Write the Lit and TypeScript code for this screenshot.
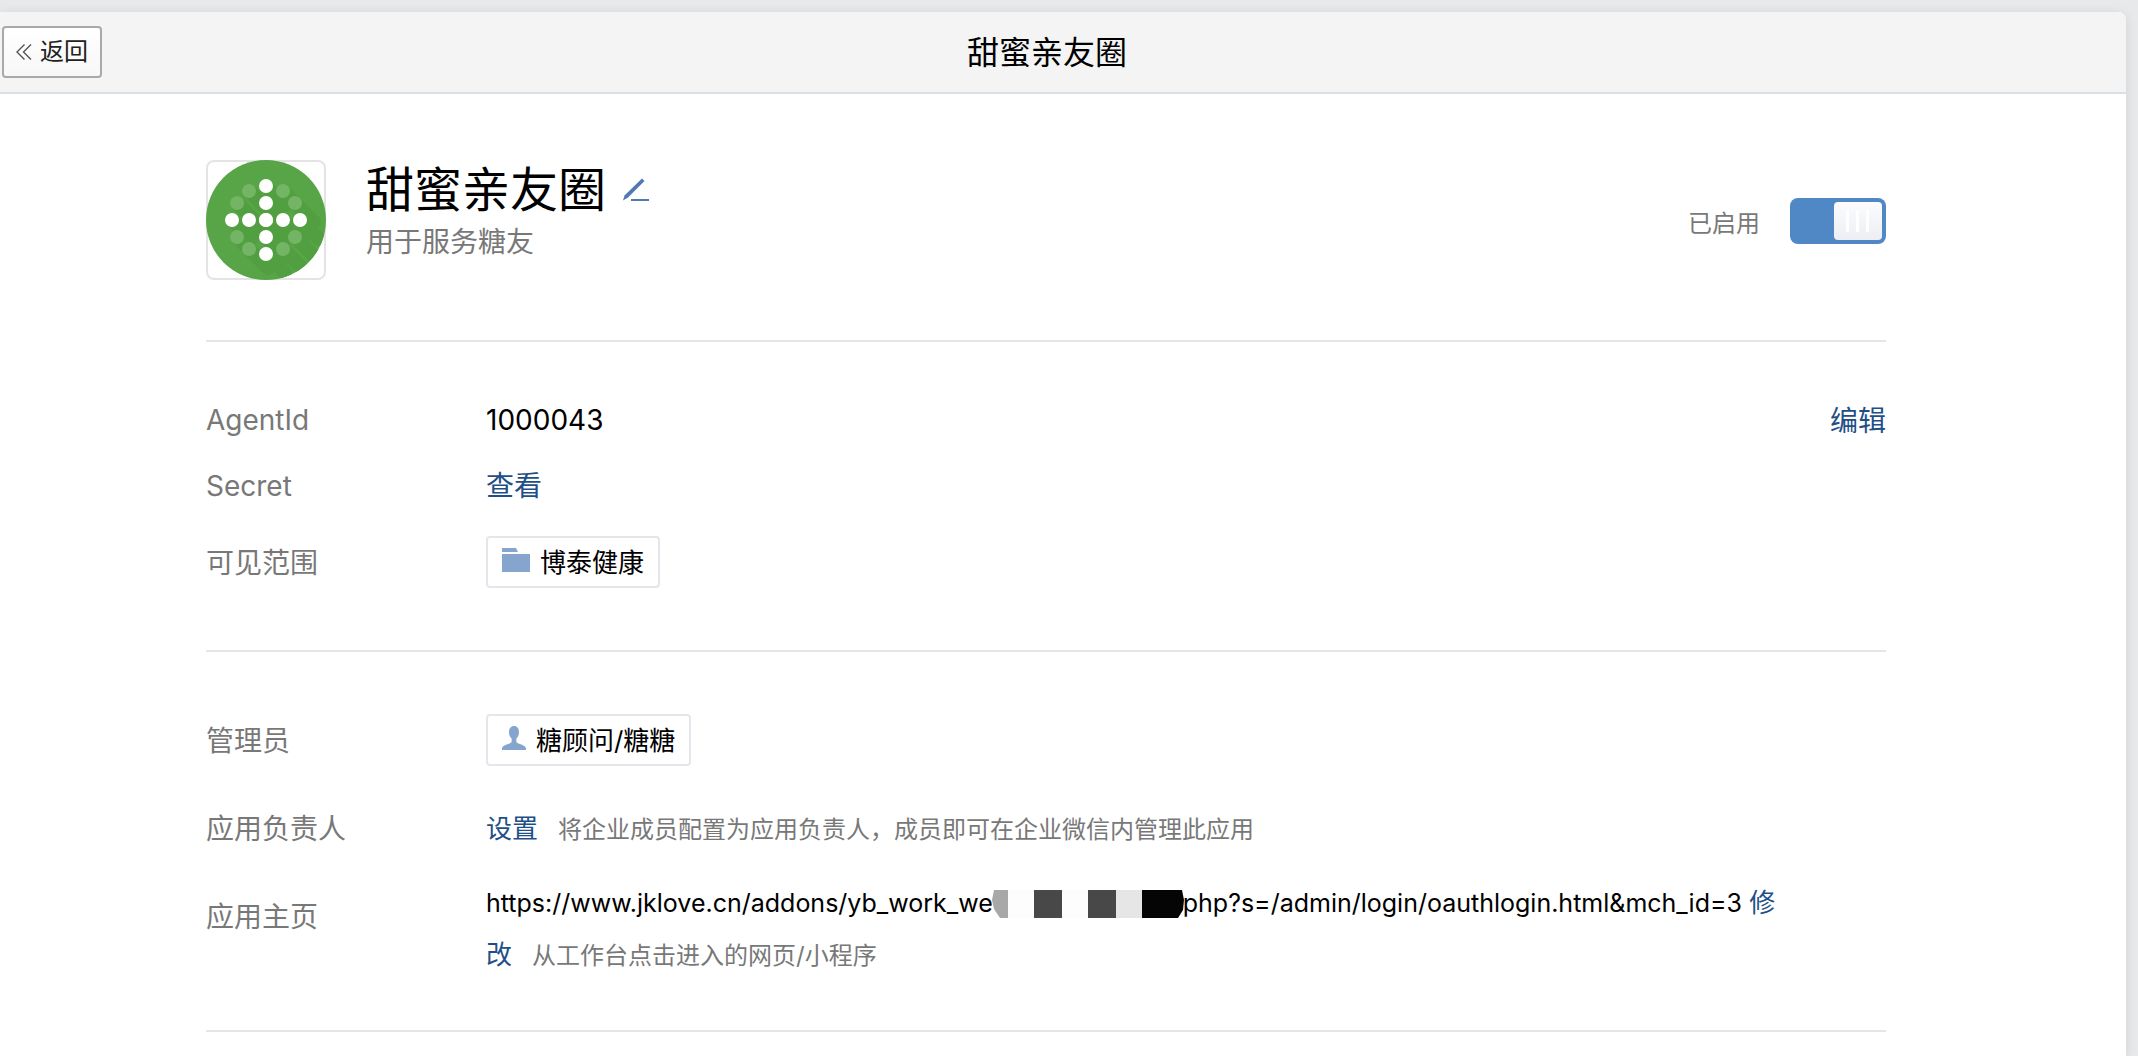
import { LitElement, html, css, svg } from "lit";
import { customElement, property, state } from "lit/decorators.js";

const AXIS = [26, 43, 60, 77, 94];
const RING: [number, number][] = [
  [43, 31], [77, 31], [31, 43], [89, 43],
  [31, 77], [89, 77], [43, 89], [77, 89],
];

@customElement("app-logo")
class AppLogo extends LitElement {
  static styles = css`
    :host { display: block; flex: none; }
    .frame {
      box-sizing: border-box;
      width: 120px;
      height: 120px;
      border: 2px solid #e4e4e4;
      border-radius: 8px;
    }
    .art { display: block; width: 120px; height: 120px; margin: -2px; }
  `;

  render() {
    const all: [number, number][] = [
      ...RING,
      ...AXIS.map((v) => [60, v] as [number, number]),
      ...AXIS.map((v) => [v, 60] as [number, number]),
    ];
    return html`
      <div class="frame">
        <svg class="art" viewBox="0 0 120 120" role="img" aria-label="应用图标">
          <defs><clipPath id="disc"><circle cx="60" cy="60" r="60" /></clipPath></defs>
          <circle cx="60" cy="60" r="60" fill="#58a547" />
          <g clip-path="url(#disc)" stroke="#529f42" stroke-width="14" stroke-linecap="round">
            ${all.map(([x, y]) => svg`<line x1=${x} y1=${y} x2=${x + 19} y2=${y + 19} />`)}
          </g>
          ${RING.map(([x, y]) => svg`<circle cx=${x} cy=${y} r="7" fill="#74b565" />`)}
          ${AXIS.map((v) => svg`
            <circle cx="60" cy=${v} r="7" fill="#fff" />
            <circle cx=${v} cy="60" r="7" fill="#fff" />`)}
        </svg>
      </div>
    `;
  }
}

@customElement("entity-tag")
class EntityTag extends LitElement {
  @property() kind = "folder";

  static styles = css`
    :host { display: inline-block; justify-self: start; }
    .tag {
      display: flex;
      align-items: center;
      gap: 10px;
      box-sizing: border-box;
      height: 52px;
      padding: 2px 14px 0;
      border: 2px solid #e4e6eb;
      border-radius: 4px;
      background: #fff;
      color: #000;
      font-size: 26px;
      line-height: 36px;
      white-space: nowrap;
    }
    svg { display: block; margin-bottom: 6px; fill: #85a5cf; }
  `;

  render() {
    const icon = this.kind === "folder"
      ? html`<svg width="28" height="24" viewBox="0 0 28 24" aria-hidden="true">
          <path d="M0 0h14l2 4H0zM0 6h28v18H0z" /></svg>`
      : html`<svg width="24" height="24" viewBox="0 0 24 24" aria-hidden="true">
          <path d="M12 0c3.200 0 5 2.500 5 6 0 3-1 5.200-2.600 6.500v3c0 1 .8 1.500 2 2C20.500 19 24 20 24 22.500V24H0v-1.500C0 20 3.500 19 7.600 17.500c1.200-.5 2-1 2-2v-3C8 11.200 7 9 7 6c0-3.500 1.800-6 5-6z" /></svg>`;
    return html`<span class="tag">${icon}<slot></slot></span>`;
  }
}

@customElement("app-root")
class AppRoot extends LitElement {
  @state() private enabled = true;

  static styles = css`
    :host {
      display: block;
      box-sizing: border-box;
      min-height: 100vh;
      padding: 12px 12px 0 0;
      overflow: hidden;
      background: #e8e9eb;
      color: #000;
      font-family: Inter, "Noto Sans CJK SC", sans-serif;
      font-size: 28px;
    }
    .panel {
      min-height: calc(100vh - 12px);
      border-radius: 0 8px 0 0;
      background: #fff;
      box-shadow: 0 2px 12px rgba(0, 0, 0, 0.1);
    }
    .bar {
      display: grid;
      grid-template-columns: 172px 1fr 206px;
      align-items: center;
      height: 80px;
      padding-left: 2px;
      border-bottom: 2px solid #dbe0e5;
      border-radius: 0 8px 0 0;
      background: #f4f4f4;
    }
    .bar-title {
      margin: 0;
      padding-top: 2px;
      font-size: 32px;
      line-height: 48px;
      font-weight: 400;
      text-align: center;
    }
    .back {
      display: flex;
      align-items: center;
      justify-content: center;
      justify-self: start;
      gap: 8px;
      box-sizing: border-box;
      width: 100px;
      height: 52px;
      padding: 0;
      border: 2px solid #a9a9a9;
      border-radius: 4px;
      background: linear-gradient(#fff, #f7f7f7);
      color: #222;
      font: inherit;
      font-size: 24px;
      line-height: 36px;
    }
    .content { padding: 66px 240px 0 206px; }
    .app {
      display: flex;
      align-items: center;
      padding-bottom: 60px;
      border-bottom: 2px solid #e4e6eb;
    }
    .intro { flex: 1; padding: 0 0 16px 40px; }
    .name-line { display: flex; align-items: center; gap: 16px; }
    .name { margin: 0; font-size: 48px; line-height: 60px; font-weight: 400; }
    .desc { margin: 0; color: #787878; line-height: 44px; }
    .icon-button { display: flex; padding: 0; border: 0; background: none; }
    .status {
      display: flex;
      align-items: center;
      gap: 30px;
      padding-top: 2px;
      color: #787878;
      font-size: 24px;
    }
    .switch {
      appearance: none;
      display: flex;
      justify-content: flex-start;
      box-sizing: border-box;
      width: 96px;
      height: 46px;
      margin: 0;
      padding: 4px;
      border-radius: 8px;
      background: #b8bcc2;
    }
    .switch:checked { justify-content: flex-end; background: #4f88c4; }
    .switch::before {
      content: "";
      width: 48px;
      height: 38px;
      border-radius: 4px;
      background:
        linear-gradient(#fff, #fff) 12px 8px / 3px 22px no-repeat,
        linear-gradient(#fff, #fff) 22px 8px / 3px 22px no-repeat,
        linear-gradient(#fff, #fff) 32px 8px / 3px 22px no-repeat,
        linear-gradient(#fcfcfe, #eceef3);
    }
    .section { margin: 0; padding: 44px 0; border-bottom: 2px solid #e4e6eb; }
    .row {
      display: grid;
      grid-template-columns: 280px 1fr auto;
      align-items: center;
      min-height: 66px;
    }
    .row.tall { min-height: 88px; }
    .row.multi { align-items: start; min-height: 114px; }
    .label { padding-top: 2px; color: #787878; line-height: 40px; }
    .row.multi .label { padding-top: 25px; }
    .value { margin: 0; padding-top: 2px; line-height: 40px; }
    .value.small { font-size: 26px; }
    .row.multi .value { padding: 5px 88px 0 0; line-height: 52px; }
    .url { font-size: 25px; }
    .hint { margin-left: 20px; color: #787878; font-size: 24px; }
    a { color: #1f4f87; text-decoration: none; }
    .mask { margin: 0 -1px; vertical-align: -6px; }
  `;

  private toggle(e: Event) {
    this.enabled = (e.target as HTMLInputElement).checked;
  }

  render() {
    return html`
      <div class="panel">
        <header class="bar">
          <button class="back" type="button">
            <svg width="16" height="18" viewBox="0 0 16 18" fill="none" stroke="#555" stroke-width="1.400" aria-hidden="true">
              <path d="M8.500 1.500 1 9l7.500 7.500M15 1.500 7.500 9l7.500 7.500" />
            </svg>
            <span>返回</span>
          </button>
          <h1 class="bar-title">甜蜜亲友圈</h1>
        </header>
        <main class="content">
          <div class="app">
            <app-logo></app-logo>
            <div class="intro">
              <div class="name-line">
                <h2 class="name">甜蜜亲友圈</h2>
                <button class="icon-button" type="button" aria-label="修改名称">
                  <svg width="28" height="24" viewBox="0 0 28 24" aria-hidden="true">
                    <path d="M20 .5 22.500 3 6 19.500 1 22.500 2.500 17.500z" fill="#4f79b0" />
                    <path d="M9 21h18v2H9z" fill="#4f79b0" />
                  </svg>
                </button>
              </div>
              <p class="desc">用于服务糖友</p>
            </div>
            <div class="status">
              <label for="enabled">${this.enabled ? "已启用" : "已停用"}</label>
              <input class="switch" id="enabled" type="checkbox" role="switch"
                .checked=${this.enabled} @change=${this.toggle} />
            </div>
          </div>

          <section class="section">
            <div class="row">
              <span class="label">AgentId</span>
              <span class="value">1000043</span>
              <a href="#edit">编辑</a>
            </div>
            <div class="row">
              <span class="label">Secret</span>
              <span class="value"><a href="#secret">查看</a></span>
            </div>
            <div class="row tall">
              <span class="label">可见范围</span>
              <entity-tag kind="folder">博泰健康</entity-tag>
            </div>
          </section>

          <section class="section">
            <div class="row tall">
              <span class="label">管理员</span>
              <entity-tag kind="person">糖顾问/糖糖</entity-tag>
            </div>
            <div class="row tall">
              <span class="label">应用负责人</span>
              <span class="value small"><a href="#owner">设置</a><span class="hint">将企业成员配置为应用负责人，成员即可在企业微信内管理此应用</span></span>
            </div>
            <div class="row multi">
              <span class="label">应用主页</span>
              <span class="value small"><span class="url">https://www.jklove.cn/addons/yb_work_we<svg class="mask" width="192" height="28" viewBox="0 0 192 28" aria-hidden="true">
                  <path d="M2 0h14v28H8L2 19 0 10z" fill="#a8a8a8" />
                  <path d="M16 0h108v28H16z" fill="#fdfdfd" />
                  <path d="M42 0h28v28H42zM96 0h28v28H96z" fill="#484848" />
                  <path d="M124 0h26v28h-26z" fill="#e6e6e6" />
                  <path d="M150 0h40l2 10-1 10-5 8h-36z" fill="#050505" />
                </svg>php?s=/admin/login/oauthlogin.html&amp;mch_id=3</span> <a href="#homepage">修改</a><span class="hint">从工作台点击进入的网页/小程序</span></span>
            </div>
          </section>
        </main>
      </div>
    `;
  }
}
